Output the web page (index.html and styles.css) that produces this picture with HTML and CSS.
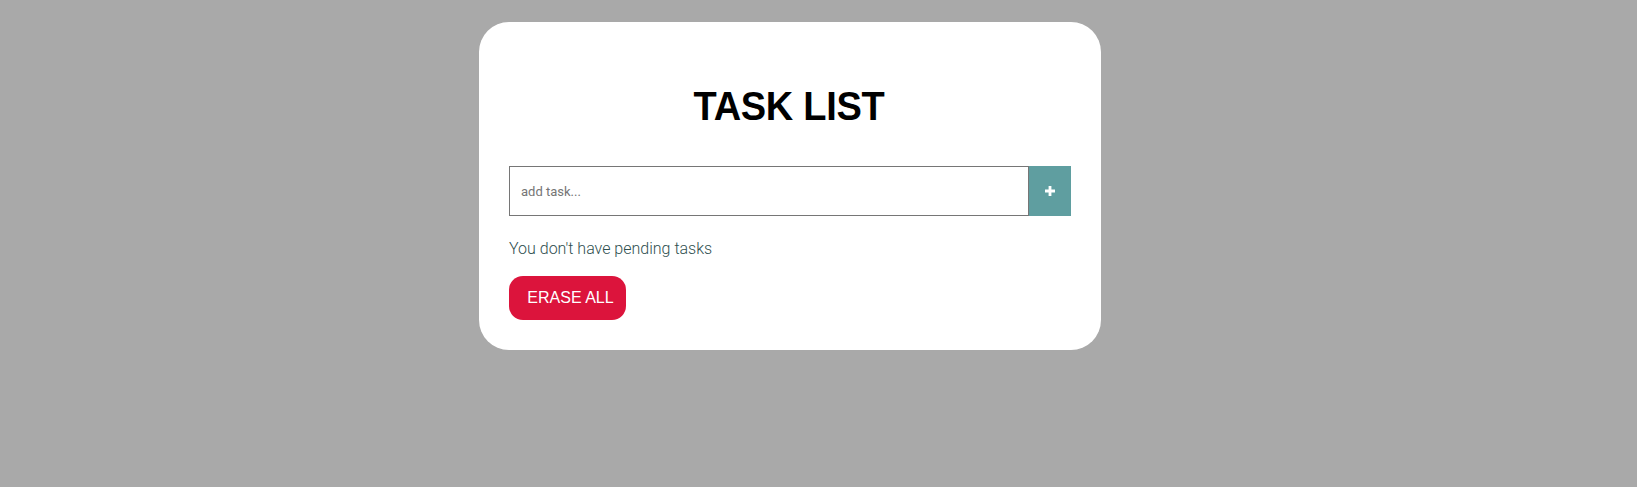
FILE: index.html
```html
<!DOCTYPE html>
<html lang="en">
<head>
<meta charset="utf-8">
<title>Task List</title>
<link rel="stylesheet" href="styles.css">
</head>
<body>
<main class="card">
  <h1 class="title">TASK LIST</h1>
  <form class="add-row" onsubmit="return false">
    <input class="task-input" type="text" placeholder="add task...">
    <button class="add-btn" type="submit" aria-label="add">
      <svg width="10" height="10" viewBox="0 0 10 10"><path d="M3.6 0h2.8v3.6H10v2.8H6.4V10H3.6V6.4H0V3.6h3.6z" fill="#fff"/></svg>
    </button>
  </form>
  <p class="empty">You don't have pending tasks</p>
  <button class="erase-btn" type="button">ERASE ALL</button>
</main>
</body>
</html>
```
FILE: styles.css
```css
html, body {
  margin: 0;
  padding: 0;
}
body {
  background: #a9a9a9;
  min-height: 487px;
  font-family: "Liberation Sans", Arial, sans-serif;
  padding: 22px 0 0 479px;
  box-sizing: border-box;
}
.card {
  width: 622px;
  box-sizing: border-box;
  background: #fff;
  border-radius: 30px;
  padding: 66px 30px 30px 30px;
  display: flex;
  flex-direction: column;
  align-items: flex-start;
}
.title {
  align-self: stretch;
  margin: 0 0 41px 0;
  text-align: center;
  font-size: 38px;
  line-height: 37px;
  font-weight: bold;
  color: #000;
  letter-spacing: -0.3px;
  padding-right: 2px;
  transform: scaleY(1.05);
}
.add-row {
  display: flex;
  align-self: stretch;
  margin: 0;
  height: 50px;
}
.task-input {
  flex: 1;
  min-width: 0;
  height: 50px;
  box-sizing: border-box;
  border: 1px solid #767676;
  padding: 0 11px;
  margin: 0;
  font-family: Roboto, "Liberation Sans", sans-serif;
  font-size: 13px;
  color: #333;
  outline: none;
}
.task-input::placeholder {
  color: #757575;
}
.add-btn {
  width: 42px;
  height: 50px;
  border: none;
  margin: 0;
  padding: 0;
  background: #5f9ea0;
  display: flex;
  align-items: center;
  justify-content: center;
}
.empty {
  margin: 23px 0 18px 0;
  font-family: Roboto, "Liberation Sans", sans-serif;
  font-weight: 300;
  font-size: 16px;
  line-height: 19px;
  color: #2f4f4f;
}
.erase-btn {
  height: 44px;
  width: 117px;
  border: none;
  border-radius: 14px;
  background: #dc143c;
  color: #fff;
  font-family: "Liberation Sans", Arial, sans-serif;
  font-size: 16px;
  padding: 0 0 0 6px;
}
```
